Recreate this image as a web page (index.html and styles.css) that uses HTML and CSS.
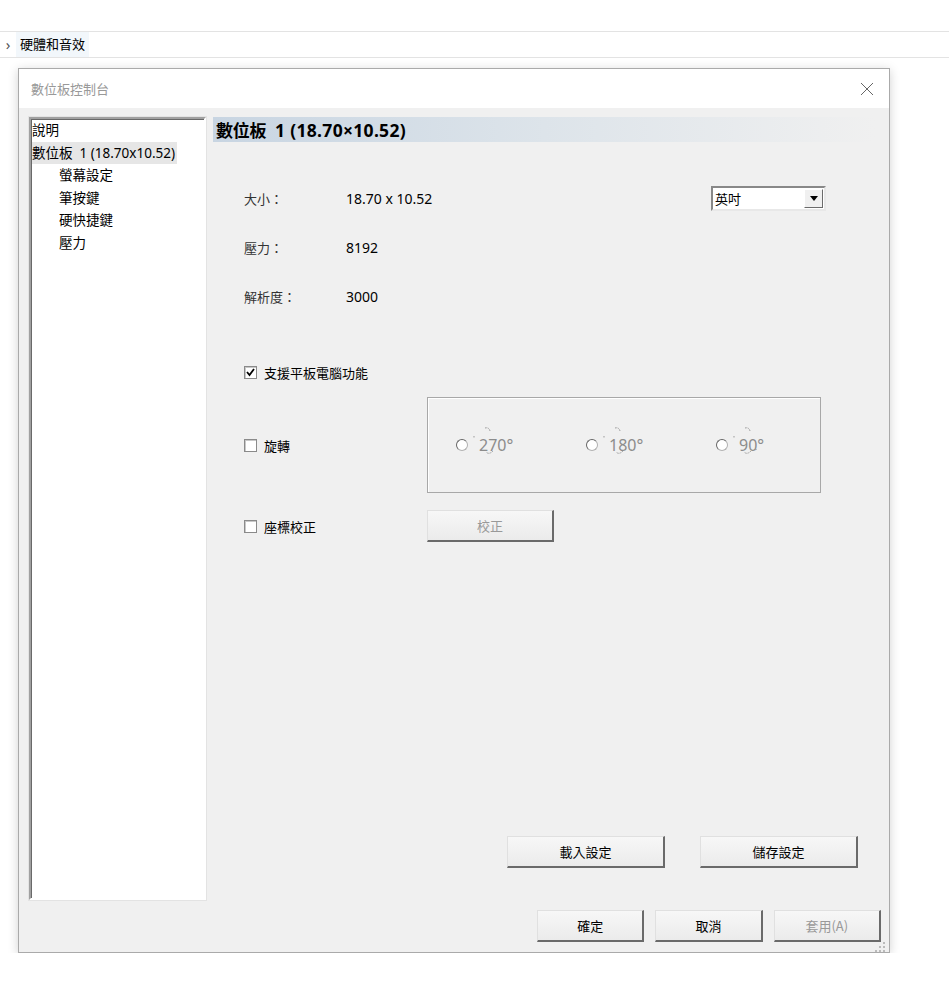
FILE: index.html
```html
<!DOCTYPE html>
<html lang="zh-Hant">
<head>
    <meta charset="UTF-8">
    <meta name="viewport" content="width=device-width, initial-scale=1.0">
    <title>數位板控制台</title>
    <link rel="stylesheet" href="styles.css">
</head>
<body>
    <div class="crumbbar">
        <span class="crumb-arrow">&rsaquo;</span>
        <span class="crumb">硬體和音效</span>
    </div>

    <div class="dialog">
        <div class="titlebar">
            <span class="title">數位板控制台</span>
            <svg class="close" width="14" height="14" viewBox="0 0 14 14">
                <path d="M1 1 L13 13 M13 1 L1 13" stroke="#666" stroke-width="1" fill="none"/>
            </svg>
        </div>

        <div class="dialog-body">
            <div class="main">
                <div class="tree">
                    <div class="tree-item">說明</div>
                    <div class="tree-item"><span class="selected">數位板&nbsp; 1 (18.70x10.52)</span></div>
                    <div class="tree-item sub">螢幕設定</div>
                    <div class="tree-item sub">筆按鍵</div>
                    <div class="tree-item sub">硬快捷鍵</div>
                    <div class="tree-item sub">壓力</div>
                </div>

                <div class="panel">
                    <div class="panel-header">數位板<span class="hdr-num">1 (18.70×10.52)</span></div>

                    <div class="info-row first">
                        <span class="info-label">大小：</span>
                        <span class="info-value">18.70 x 10.52</span>
                        <div class="combo">
                            <span class="combo-text">英吋</span>
                            <span class="combo-btn">
                                <svg width="8" height="5" viewBox="0 0 8 5"><path d="M0 0 H8 L4 5 Z" fill="#000"/></svg>
                            </span>
                        </div>
                    </div>
                    <div class="info-row">
                        <span class="info-label">壓力：</span>
                        <span class="info-value">8192</span>
                    </div>
                    <div class="info-row">
                        <span class="info-label">解析度：</span>
                        <span class="info-value">3000</span>
                    </div>

                    <div class="check-row tablet">
                        <span class="checkbox checked">
                            <svg width="9" height="9" viewBox="0 0 9 9"><path d="M1 4 L3.5 7 L8 1" stroke="#000" stroke-width="1.8" fill="none"/></svg>
                        </span>
                        <span>支援平板電腦功能</span>
                    </div>

                    <div class="rotate-row">
                        <div class="check-row cell">
                            <span class="checkbox"></span>
                            <span>旋轉</span>
                        </div>
                        <div class="groupbox">
                            <div class="radio-opt"><span class="radio"></span><span class="deg">270°<svg class="deco" width="34" height="34" viewBox="0 0 34 34"><path d="M13 2 Q17 1 18 5 M2 10 L2 12 M29 23 L29 24 M21 25 Q17 29 14 26" stroke="#999" stroke-width="1" stroke-dasharray="1.5 1" fill="none"/></svg></span></div>
                            <div class="radio-opt"><span class="radio"></span><span class="deg">180°<svg class="deco" width="34" height="34" viewBox="0 0 34 34"><path d="M13 2 Q17 1 18 5 M2 10 L2 12 M29 23 L29 24 M21 25 Q17 29 14 26" stroke="#999" stroke-width="1" stroke-dasharray="1.5 1" fill="none"/></svg></span></div>
                            <div class="radio-opt"><span class="radio"></span><span class="deg">90°<svg class="deco" width="34" height="34" viewBox="0 0 34 34"><path d="M13 2 Q17 1 18 5 M2 10 L2 12 M24 23 L24 24 M19 25 Q15 29 12 26" stroke="#999" stroke-width="1" stroke-dasharray="1.5 1" fill="none"/></svg></span></div>
                        </div>
                    </div>

                    <div class="calib-row">
                        <div class="check-row cell">
                            <span class="checkbox"></span>
                            <span>座標校正</span>
                        </div>
                        <button class="btn calib disabled">校正</button>
                    </div>

                    <div class="settings-row">
                        <button class="btn wide">載入設定</button>
                        <button class="btn wide">儲存設定</button>
                    </div>
                </div>
            </div>

            <div class="footer">
                <button class="btn">確定</button>
                <button class="btn">取消</button>
                <button class="btn disabled">套用(A)</button>
                <svg class="grip" width="10" height="10" viewBox="0 0 10 10">
                    <g fill="#bbb">
                        <rect x="8" y="0" width="2" height="2"/>
                        <rect x="4" y="4" width="2" height="2"/><rect x="8" y="4" width="2" height="2"/>
                        <rect x="0" y="8" width="2" height="2"/><rect x="4" y="8" width="2" height="2"/><rect x="8" y="8" width="2" height="2"/>
                    </g>
                </svg>
            </div>
        </div>
    </div>
</body>
</html>
```

FILE: styles.css
```css
body {
    margin: 0;
    padding: 0;
    background-color: #fff;
    font-family: "Noto Sans", "Noto Sans CJK TC", sans-serif;
    font-size: 13px;
    color: #000;
}

/* breadcrumb strip above the dialog */
.crumbbar {
    margin-top: 31px;
    height: 25px;
    border-top: 1px solid #e3e3e3;
    border-bottom: 1px solid #e3e3e3;
    display: flex;
    align-items: stretch;
}
.crumb-arrow {
    width: 16px;
    text-align: center;
    color: #555;
    font-size: 15px;
    line-height: 24px;
}
.crumb {
    background-color: #f2f7fb;
    padding: 0 4px;
    line-height: 25px;
    font-size: 13px;
}

/* dialog window */
.dialog {
    margin: 10px 0 0 18px;
    width: 870px;
    height: 883px;
    border: 1px solid #aaa;
    box-shadow: 0 2px 10px rgba(0, 0, 0, 0.18);
    background-color: #f0f0f0;
    display: flex;
    flex-direction: column;
}
.titlebar {
    height: 39px;
    background-color: #fff;
    display: flex;
    align-items: center;
    justify-content: space-between;
    padding: 0 15px 0 12px;
}
.title {
    color: #999;
    font-size: 13px;
}
.dialog-body {
    flex: 1;
    display: flex;
    flex-direction: column;
    padding: 9px 8px 0 10px;
}
.main {
    display: flex;
    gap: 7px;
}

/* left tree */
.tree {
    width: 172px;
    height: 779px;
    background-color: #fff;
    border-style: solid;
    border-width: 2px;
    border-color: #a0a0a0 #fff #fff #a0a0a0;
    box-shadow: inset 1px 1px 0 #696969, 0 0 0 1px #e3e3e3;
    padding-left: 1px;
}
.tree-item {
    line-height: 22.6px;
    font-size: 13.5px;
    white-space: nowrap;
}
.tree-item.sub {
    padding-left: 27px;
}
.selected {
    background-color: #e6e6e6;
    padding: 0 2px 0 0;
    display: inline-block;
}

/* right panel */
.panel {
    flex: 1;
    height: 783px;
    display: flex;
    flex-direction: column;
}
.panel-header {
    height: 25px;
    margin-right: 6px;
    background: linear-gradient(to right, #c8d5e2, #dde4ea 50%, #f0f0f0);
    font-family: "Noto Sans CJK TC", sans-serif;
    font-weight: bold;
    font-size: 17px;
    line-height: 25px;
    padding-left: 3px;
    letter-spacing: -0.3px;
}
.hdr-num {
    font-family: "Noto Sans", sans-serif;
    font-size: 17.5px;
    margin-left: 9px;
    letter-spacing: 0.3px;
}
.info-row {
    display: flex;
    align-items: center;
    height: 25px;
    margin-top: 24px;
    padding-left: 31px;
}
.info-row.first {
    margin-top: 44px;
}
.info-label {
    width: 102px;
    color: #333;
}
.info-value {
    font-size: 14px;
}
.combo {
    margin-left: auto;
    margin-right: 55px;
    width: 111px;
    height: 21px;
    background-color: #fff;
    border-style: solid;
    border-width: 2px;
    border-color: #888 #e8e8e8 #e8e8e8 #888;
    display: flex;
    align-items: center;
}
.combo-text {
    flex: 1;
    padding-left: 2px;
}
.combo-btn {
    width: 17px;
    height: 17px;
    margin-right: 1px;
    background-color: #f0f0f0;
    border-style: solid;
    border-width: 1px;
    border-color: #fff #6b6b6b #6b6b6b #fff;
    display: flex;
    align-items: center;
    justify-content: center;
}

/* checkboxes */
.check-row {
    display: flex;
    align-items: center;
    gap: 7px;
    padding-left: 31px;
    font-size: 13px;
}
.check-row.tablet {
    margin-top: 50px;
    height: 26px;
}
.check-row.cell {
    width: 183px;
}
.checkbox {
    width: 11px;
    height: 11px;
    background-color: #fff;
    border: 1px solid #8a8a8a;
    box-shadow: inset 1px 1px 0 #c8c8c8;
    display: flex;
    align-items: center;
    justify-content: center;
}

/* rotation options */
.rotate-row {
    display: flex;
    align-items: center;
    margin-top: 12px;
}
.groupbox {
    width: 394px;
    height: 96px;
    box-sizing: border-box;
    border: 1px solid #a8a8a8;
    box-shadow: inset 1px 1px 0 #fff;
    display: flex;
    align-items: center;
    padding-left: 28px;
}
.radio-opt {
    flex: none;
    width: 130px;
    display: flex;
    align-items: center;
    gap: 8px;
}
.radio-opt:last-child {
    width: auto;
}
.radio {
    width: 10px;
    height: 10px;
    border-radius: 50%;
    border: 1px solid #b0b0b0;
    border-top-color: #666;
    border-left-color: #666;
    background-color: #fff;
}
.deg {
    position: relative;
    color: #8c8c8c;
    font-size: 16px;
    padding-left: 3px;
}
.deco {
    position: absolute;
    left: -4px;
    top: -8px;
}

/* calibration */
.calib-row {
    display: flex;
    align-items: center;
    margin-top: 17px;
    height: 32px;
}

/* buttons */
.btn {
    width: 108px;
    height: 32px;
    font-family: "Noto Sans CJK TC", sans-serif;
    font-size: 13px;
    color: #000;
    background: linear-gradient(#f7f7f7, #ebebeb);
    border-style: solid;
    border-width: 1px 2px 2px 1px;
    border-color: #e0e0e0 #6a6a6a #6a6a6a #e0e0e0;
    padding: 0;
    cursor: pointer;
}
.btn.disabled {
    color: #999;
}
.btn.calib {
    width: 127px;
    height: 32px;
}
.btn.wide {
    width: 158px;
}
.settings-row {
    margin-top: auto;
    margin-bottom: 32px;
    display: flex;
    gap: 35px;
    padding-left: 294px;
}

.footer {
    margin-top: 10px;
    display: flex;
    gap: 11px;
    padding-left: 508px;
    position: relative;
}
.grip {
    position: absolute;
    right: -4px;
    bottom: -10px;
}
```
